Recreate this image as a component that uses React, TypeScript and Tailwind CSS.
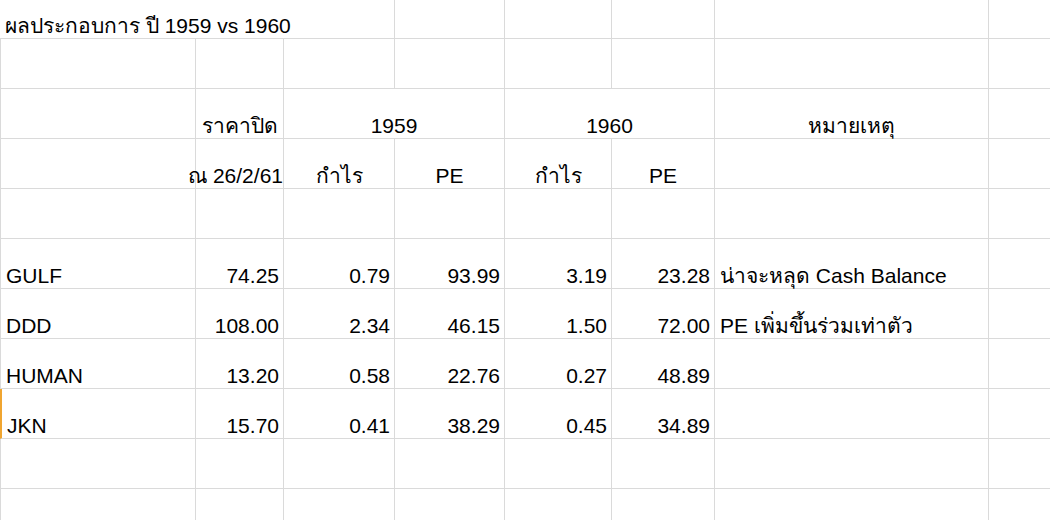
import React from "react";

// column widths in px: A..H
const COLS = "grid-cols-[196px_88px_111px_110px_107px_103px_274px_62px]";

type Cell = {
  text?: string;
  span?: number;
  align?: "left" | "right" | "center" | "flush";
};

const cellBase =
  "flex items-end h-full border-r border-b border-[#dadada] pb-[2px] leading-none whitespace-nowrap overflow-visible";

function Row({ cells, first, selected }: { cells: Cell[]; first?: boolean; selected?: boolean }) {
  return (
    <>
      {cells.map((c, i) => {
        const span =
          c.span === 3 ? "col-span-3" : c.span === 2 ? "col-span-2" : "col-span-1";
        const align =
          c.align === "right"
            ? "justify-end pr-[4px]"
            : c.align === "flush"
            ? "justify-end pr-0"
            : c.align === "center"
            ? "justify-center"
            : "justify-start pl-[5px]";
        const left =
          i === 0 && !first
            ? selected
              ? "border-l-2 border-l-[#f0a530]"
              : "border-l border-l-[#dadada]"
            : "";
        return (
          <div key={i} className={`${cellBase} ${span} ${align} ${left}`}>
            {c.text ? <span>{c.text}</span> : null}
          </div>
        );
      })}
    </>
  );
}

const empty = (): Cell[] => Array.from({ length: 8 }, () => ({}));

const data = [
  ["GULF", "74.25", "0.79", "93.99", "3.19", "23.28", "น่าจะหลุด Cash Balance"],
  ["DDD", "108.00", "2.34", "46.15", "1.50", "72.00", "PE เพิ่มขึ้นร่วมเท่าตัว"],
  ["HUMAN", "13.20", "0.58", "22.76", "0.27", "48.89", ""],
  ["JKN", "15.70", "0.41", "38.29", "0.45", "34.89", ""],
];

export default function App() {
  return (
    <div
      className="w-[1050px] h-[520px] overflow-hidden bg-white text-black text-[21px]"
      style={{ fontFamily: '"Liberation Sans", Arial, Tahoma, "DejaVu Sans", sans-serif' }}
    >
      <div className={`grid ${COLS} grid-rows-[39px_repeat(10,50px)]`}>
        {/* title row */}
        <Row
          first
          cells={[
            { text: "ผลประกอบการ ปี 1959 vs 1960", span: 3 },
            {}, {}, {}, {}, {},
          ]}
        />
        <Row cells={empty()} />
        {/* header rows */}
        <Row
          cells={[
            {},
            { text: "ราคาปิด", align: "center" },
            { text: "1959", span: 2, align: "center" },
            { text: "1960", span: 2, align: "center" },
            { text: "หมายเหตุ", align: "center" },
            {},
          ]}
        />
        <Row
          cells={[
            {},
            { text: "ณ 26/2/61", align: "flush" },
            { text: "กำไร", align: "center" },
            { text: "PE", align: "center" },
            { text: "กำไร", align: "center" },
            { text: "PE", align: "center" },
            {},
            {},
          ]}
        />
        <Row cells={empty()} />
        {data.map((r, i) => (
          <Row
            key={r[0]}
            selected={i === 3}
            cells={[
              { text: r[0] },
              { text: r[1], align: "right" },
              { text: r[2], align: "right" },
              { text: r[3], align: "right" },
              { text: r[4], align: "right" },
              { text: r[5], align: "right" },
              { text: r[6] },
              {},
            ]}
          />
        ))}
        <Row cells={empty()} />
        <Row cells={empty()} />
      </div>
    </div>
  );
}
